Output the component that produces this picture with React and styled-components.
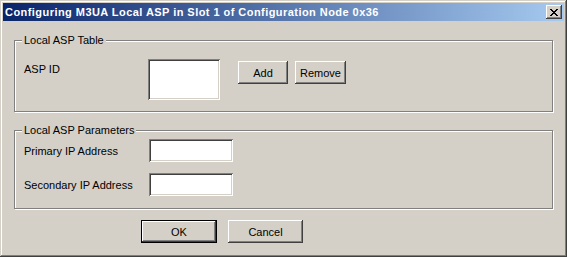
import React from "react";
import styled, { createGlobalStyle } from "styled-components";

const Global = createGlobalStyle`
  html, body { margin: 0; padding: 0; background: #d4d0c8; }
  body { font-family: "Liberation Sans", Arial, sans-serif; font-size: 11px; color: #000; }
`;

const Window = styled.div`
  width: 567px;
  height: 257px;
  box-sizing: border-box;
  padding: 3px;
  background: #d4d0c8;
  box-shadow: inset -1px -1px 0 #404040, inset 1px 1px 0 #d4d0c8,
    inset -2px -2px 0 #808080, inset 2px 2px 0 #ffffff;
  display: flex;
  flex-direction: column;
`;

const TitleBar = styled.div`
  height: 18px;
  display: flex;
  align-items: center;
  justify-content: space-between;
  padding: 0 2px 0 2px;
  background: linear-gradient(to right, #0a246a, #a6caf0);
  color: #fff;
  font-weight: bold;
  font-size: 11px;
`;

const TitleText = styled.span`
  letter-spacing: 0.45px;
  white-space: nowrap;
`;

const CloseButton = styled.div`
  width: 16px;
  height: 14px;
  box-sizing: border-box;
  background: #d4d0c8;
  display: flex;
  align-items: center;
  justify-content: center;
  box-shadow: inset -1px -1px 0 #404040, inset 1px 1px 0 #ffffff,
    inset -2px -2px 0 #808080, inset 2px 2px 0 #d4d0c8;
`;

const Body = styled.div`
  padding: 19px 10px 0 11px;
  display: flex;
  flex-direction: column;
`;

const GroupBox = styled.div`
  position: relative;
  border: 1px solid #808080;
  box-shadow: 1px 1px 0 #ffffff, inset 1px 1px 0 #ffffff;
  margin-right: 1px;
  height: ${(p) => p.$h}px;
  box-sizing: border-box;
  padding: ${(p) => p.$pad};
  margin-bottom: ${(p) => p.$mb}px;
  display: flex;
  flex-direction: column;
  gap: ${(p) => p.$gap || 0}px;
`;

const Legend = styled.span`
  position: absolute;
  top: -7px;
  left: 7px;
  padding: 0 2px;
  background: #d4d0c8;
  line-height: 13px;
`;

const Row = styled.div`
  display: flex;
  align-items: ${(p) => p.$align || "center"};
`;

const Label = styled.span`
  width: ${(p) => p.$w}px;
  padding-left: 9px;
  box-sizing: border-box;
  margin-top: ${(p) => p.$mt || 0}px;
  white-space: nowrap;
`;

const Sunken = styled.div`
  width: ${(p) => p.$w}px;
  height: ${(p) => p.$h}px;
  background: #fff;
  box-sizing: border-box;
  box-shadow: inset 1px 1px 0 #808080, inset -1px -1px 0 #ffffff,
    inset 2px 2px 0 #404040, inset -2px -2px 0 #d4d0c8;
`;

const Button = styled.div`
  width: ${(p) => p.$w}px;
  height: 23px;
  box-sizing: border-box;
  display: flex;
  align-items: center;
  justify-content: center;
  margin-left: ${(p) => p.$ml || 0}px;
  margin-top: ${(p) => p.$mt || 0}px;
  background: #d4d0c8;
  box-shadow: ${(p) =>
    p.$default
      ? "inset 0 0 0 1px #000, inset -2px -2px 0 #404040, inset 2px 2px 0 #ffffff, inset -3px -3px 0 #808080"
      : "inset -1px -1px 0 #404040, inset 1px 1px 0 #ffffff, inset -2px -2px 0 #808080, inset 2px 2px 0 #d4d0c8"};
`;

const ButtonRow = styled.div`
  display: flex;
  padding-left: 127px;
`;

export default function App() {
  return (
    <>
      <Global />
      <Window>
        <TitleBar>
          <TitleText>Configuring M3UA Local ASP in Slot 1 of Configuration Node 0x36</TitleText>
          <CloseButton>
            <svg width="8" height="7" viewBox="0 0 8 7" shapeRendering="crispEdges">
              <path d="M0 0h2v1h-2zM6 0h2v1h-2zM1 1h2v1h-2zM5 1h2v1h-2zM2 2h4v1h-4zM3 3h2v1h-2zM2 4h4v1h-4zM1 5h2v1h-2zM5 5h2v1h-2zM0 6h2v1h-2zM6 6h2v1h-2z" fill="#000" />
            </svg>
          </CloseButton>
        </TitleBar>
        <Body>
          <GroupBox $h={72} $pad="18px 0 0 0" $mb={18}>
            <Legend>Local ASP Table</Legend>
            <Row $align="flex-start">
              <Label $w={133} $mt={4}>ASP ID</Label>
              <Sunken $w={72} $h={41} />
              <Button $w={50} $ml={18} $mt={2}>Add</Button>
              <Button $w={51} $ml={7} $mt={2}>Remove</Button>
            </Row>
          </GroupBox>
          <GroupBox $h={79} $pad="8px 0 0 0" $mb={11} $gap={11}>
            <Legend>Local ASP Parameters</Legend>
            <Row>
              <Label $w={134}>Primary IP Address</Label>
              <Sunken $w={84} $h={23} />
            </Row>
            <Row>
              <Label $w={134}>Secondary IP Address</Label>
              <Sunken $w={84} $h={23} />
            </Row>
          </GroupBox>
          <ButtonRow>
            <Button $w={76} $default>OK</Button>
            <Button $w={75} $ml={11}>Cancel</Button>
          </ButtonRow>
        </Body>
      </Window>
    </>
  );
}
